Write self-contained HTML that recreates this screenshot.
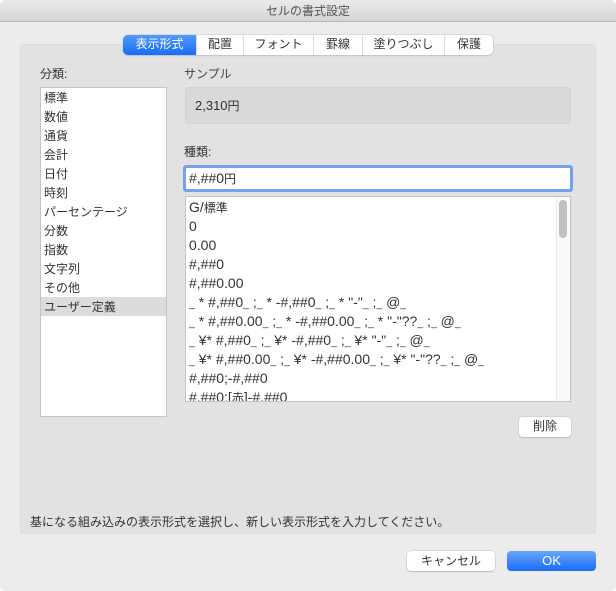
<!DOCTYPE html>
<html lang="ja"><head><meta charset="utf-8"><style>
html,body{margin:0;padding:0;background:#fff}
body{width:616px;height:591px;position:relative;overflow:hidden;font-family:"Liberation Sans","Noto Sans CJK JP",sans-serif;font-size:12px;color:#303030}
div{box-sizing:border-box}
.a{position:absolute;white-space:nowrap}
#win{left:0;top:0;width:616px;height:591px;background:#ececec;border-radius:6px}
#title{left:0;top:0;width:616px;height:22px;background:linear-gradient(#ebebeb,#d4d4d4);border-bottom:1px solid #b9b9b9;border-radius:6px 6px 0 0;text-align:center;line-height:22px;color:#555}
#panel{left:20px;top:44px;width:576px;height:490px;background:#e2e2e2;border:1px solid #dcdcdc;border-radius:4px}
#tabs{left:123px;top:35px;width:370px;height:20px;background:#fff;border-radius:5px;box-shadow:0 0 0 .5px #c8c8c8,0 1px 1px #bbb;line-height:19px}
.t{position:absolute;top:0;height:20px;text-align:center;border-left:1px solid #dcdcdc;color:#333}
#t0{left:0;width:73px;border:0;background:linear-gradient(#4f9bfb,#1a6cf5);color:#fff;border-radius:5px 0 0 5px}
.box{background:#fff;border:1px solid #c4c4c4}
.r{position:absolute;left:0;right:0;height:19px;line-height:21px;padding-left:3px;color:#333}
.w .r{line-height:19px}
b{font-weight:normal;font-size:12px}
i{font-style:normal;font-size:10.5px}
.btn{background:#fff;border-radius:4px;box-shadow:0 0 0 .5px #c6c6c6,0 1px 1px #b5b5b5;text-align:center;color:#333}
</style></head><body>
<div class="a" id="win"></div>
<div class="a" id="title">セルの書式設定</div>
<div class="a" id="panel"></div>
<div class="a" id="tabs">
<div class="t" id="t0">表示形式</div>
<div class="t" style="left:73px;width:47px">配置</div>
<div class="t" style="left:120px;width:70px">フォント</div>
<div class="t" style="left:190px;width:49px">罫線</div>
<div class="t" style="left:239px;width:82px">塗りつぶし</div>
<div class="t" style="left:321px;width:49px">保護</div>
</div>
<div class="a" style="left:40px;top:66px;line-height:16px">分類:</div>
<div class="a box" style="left:40px;top:87px;width:127px;height:330px">
<div class="r" style="top:0">標準</div>
<div class="r" style="top:19px">数値</div>
<div class="r" style="top:38px">通貨</div>
<div class="r" style="top:57px">会計</div>
<div class="r" style="top:76px">日付</div>
<div class="r" style="top:95px">時刻</div>
<div class="r" style="top:114px">パーセンテージ</div>
<div class="r" style="top:133px">分数</div>
<div class="r" style="top:152px">指数</div>
<div class="r" style="top:171px">文字列</div>
<div class="r" style="top:190px">その他</div>
<div class="r" style="top:209px;background:#dcdcdc">ユーザー定義</div>
</div>
<div class="a" style="left:184px;top:66px;line-height:16px;color:#444">サンプル</div>
<div class="a" style="left:185px;top:87px;width:386px;height:37px;background:#d9d9d9;border:1px solid #d3d3d3;border-radius:3px;line-height:36px;padding-left:9px;font-size:13px">2,310<b>円</b></div>
<div class="a" style="left:184px;top:144px;line-height:16px">種類:</div>
<div class="a" style="left:186px;top:168px;width:384px;height:21px;background:#fff;box-shadow:0 0 0 3px #74a3ec;border-radius:1px;line-height:21px;padding-left:3px;font-size:14px">#,##0<b>円</b></div>
<div class="a box w" style="left:185px;top:196px;width:386px;height:206px;overflow:hidden;font-size:14px">
<div class="r" style="top:1px">G/<b>標準</b></div>
<div class="r" style="top:20px">0</div>
<div class="r" style="top:39px">0.00</div>
<div class="r" style="top:58px">#,##0</div>
<div class="r" style="top:77px">#,##0.00</div>
<div class="r" style="top:96px"><i>_</i> * #,##0<i>_</i> ;<i>_</i> * -#,##0<i>_</i> ;<i>_</i> * "-"<i>_</i> ;<i>_</i> @<i>_</i></div>
<div class="r" style="top:115px"><i>_</i> * #,##0.00<i>_</i> ;<i>_</i> * -#,##0.00<i>_</i> ;<i>_</i> * "-"??<i>_</i> ;<i>_</i> @<i>_</i></div>
<div class="r" style="top:134px"><i>_</i> ¥* #,##0<i>_</i> ;<i>_</i> ¥* -#,##0<i>_</i> ;<i>_</i> ¥* "-"<i>_</i> ;<i>_</i> @<i>_</i></div>
<div class="r" style="top:153px"><i>_</i> ¥* #,##0.00<i>_</i> ;<i>_</i> ¥* -#,##0.00<i>_</i> ;<i>_</i> ¥* "-"??<i>_</i> ;<i>_</i> @<i>_</i></div>
<div class="r" style="top:172px">#,##0;-#,##0</div>
<div class="r" style="top:191px">#,##0;[<b>赤</b>]-#,##0</div>
<div class="a" style="left:370px;top:0;width:14px;height:204px;background:#fafafa;border-left:1px solid #e8e8e8"></div>
<div class="a" style="left:373px;top:3px;width:8px;height:38px;background:#c1c1c1;border-radius:4px"></div>
</div>
<div class="a btn" style="left:519px;top:417px;width:52px;height:20px;line-height:19px">削除</div>
<div class="a" style="left:30px;top:514px;line-height:16px;color:#333">基になる組み込みの表示形式を選択し、新しい表示形式を入力してください。</div>
<div class="a btn" style="left:407px;top:551px;width:88px;height:20px;line-height:20px">キャンセル</div>
<div class="a" style="left:507px;top:551px;width:89px;height:20px;line-height:20px;border-radius:4px;background:linear-gradient(#69a6fa,#1a6cf8);color:#fff;text-align:center;font-size:13px">OK</div>
</body></html>
